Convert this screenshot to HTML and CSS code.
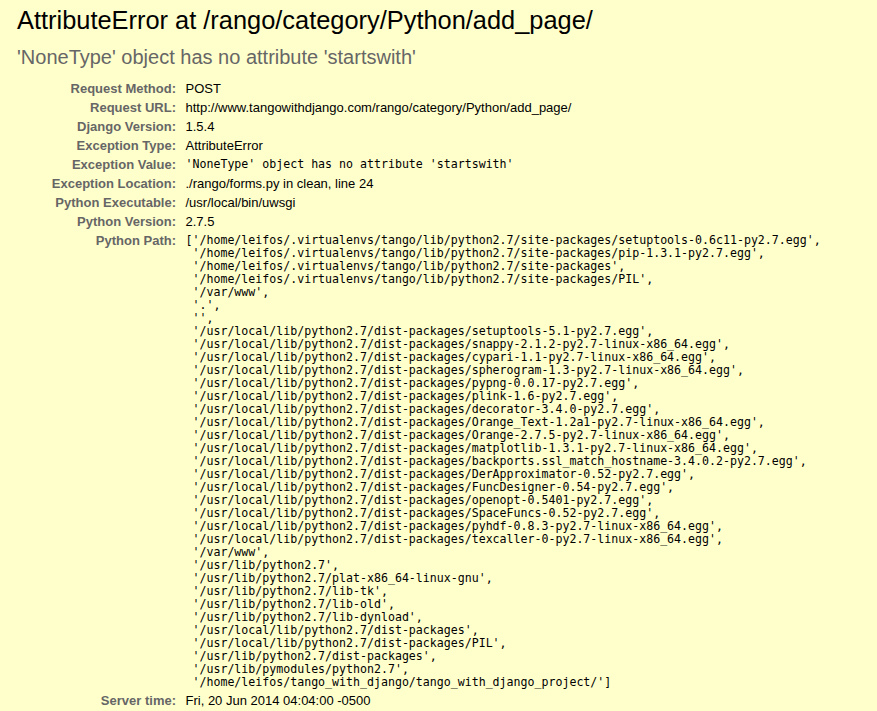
FILE: index.html
```html
<!DOCTYPE html>
<html>
<head>
<meta charset="utf-8">
<title>AttributeError at /rango/category/Python/add_page/</title>
<link rel="stylesheet" href="styles.css">
</head>
<body>
<div class="summary">
  <h1 class="title">AttributeError at /rango/category/Python/add_page/</h1>
  <pre class="exception-value">'NoneType' object has no attribute 'startswith'</pre>
  <table class="meta">
    <tr><th>Request Method:</th><td>POST</td></tr>
    <tr><th>Request URL:</th><td>http://www.tangowithdjango.com/rango/category/Python/add_page/</td></tr>
    <tr><th>Django Version:</th><td>1.5.4</td></tr>
    <tr><th>Exception Type:</th><td>AttributeError</td></tr>
    <tr><th>Exception Value:</th><td><pre class="code">'NoneType' object has no attribute 'startswith'</pre></td></tr>
    <tr><th>Exception Location:</th><td>./rango/forms.py in clean, line 24</td></tr>
    <tr><th>Python Executable:</th><td>/usr/local/bin/uwsgi</td></tr>
    <tr><th>Python Version:</th><td>2.7.5</td></tr>
    <tr><th>Python Path:</th><td><pre class="code">['/home/leifos/.virtualenvs/tango/lib/python2.7/site-packages/setuptools-0.6c11-py2.7.egg',
 '/home/leifos/.virtualenvs/tango/lib/python2.7/site-packages/pip-1.3.1-py2.7.egg',
 '/home/leifos/.virtualenvs/tango/lib/python2.7/site-packages',
 '/home/leifos/.virtualenvs/tango/lib/python2.7/site-packages/PIL',
 '/var/www',
 '.',
 '',
 '/usr/local/lib/python2.7/dist-packages/setuptools-5.1-py2.7.egg',
 '/usr/local/lib/python2.7/dist-packages/snappy-2.1.2-py2.7-linux-x86_64.egg',
 '/usr/local/lib/python2.7/dist-packages/cypari-1.1-py2.7-linux-x86_64.egg',
 '/usr/local/lib/python2.7/dist-packages/spherogram-1.3-py2.7-linux-x86_64.egg',
 '/usr/local/lib/python2.7/dist-packages/pypng-0.0.17-py2.7.egg',
 '/usr/local/lib/python2.7/dist-packages/plink-1.6-py2.7.egg',
 '/usr/local/lib/python2.7/dist-packages/decorator-3.4.0-py2.7.egg',
 '/usr/local/lib/python2.7/dist-packages/Orange_Text-1.2a1-py2.7-linux-x86_64.egg',
 '/usr/local/lib/python2.7/dist-packages/Orange-2.7.5-py2.7-linux-x86_64.egg',
 '/usr/local/lib/python2.7/dist-packages/matplotlib-1.3.1-py2.7-linux-x86_64.egg',
 '/usr/local/lib/python2.7/dist-packages/backports.ssl_match_hostname-3.4.0.2-py2.7.egg',
 '/usr/local/lib/python2.7/dist-packages/DerApproximator-0.52-py2.7.egg',
 '/usr/local/lib/python2.7/dist-packages/FuncDesigner-0.54-py2.7.egg',
 '/usr/local/lib/python2.7/dist-packages/openopt-0.5401-py2.7.egg',
 '/usr/local/lib/python2.7/dist-packages/SpaceFuncs-0.52-py2.7.egg',
 '/usr/local/lib/python2.7/dist-packages/pyhdf-0.8.3-py2.7-linux-x86_64.egg',
 '/usr/local/lib/python2.7/dist-packages/texcaller-0-py2.7-linux-x86_64.egg',
 '/var/www',
 '/usr/lib/python2.7',
 '/usr/lib/python2.7/plat-x86_64-linux-gnu',
 '/usr/lib/python2.7/lib-tk',
 '/usr/lib/python2.7/lib-old',
 '/usr/lib/python2.7/lib-dynload',
 '/usr/local/lib/python2.7/dist-packages',
 '/usr/local/lib/python2.7/dist-packages/PIL',
 '/usr/lib/python2.7/dist-packages',
 '/usr/lib/pymodules/python2.7',
 '/home/leifos/tango_with_django/tango_with_django_project/']</pre></td></tr>
    <tr><th>Server time:</th><td>Fri, 20 Jun 2014 04:04:00 -0500</td></tr>
  </table>
</div>
</body>
</html>
```

FILE: styles.css
```css
html, body {
  margin: 0;
  padding: 0;
}
body {
  background: #ffffcc;
  font-family: "Liberation Sans", Arial, sans-serif;
  font-size: 13px;
  color: #000;
}
.summary {
  background: #ffffcc;
  padding: 5px 17px 10px 17px;
  min-height: 696px;
}
.title {
  margin: 0;
  font-size: 25.4px;
  font-weight: normal;
  line-height: 30px;
}
.exception-value {
  margin: 11px 0 11px 0;
  font-family: "Liberation Sans", Arial, sans-serif;
  font-size: 20px;
  line-height: 22px;
  color: #666;
  white-space: pre-wrap;
}
.meta {
  border: none;
  border-collapse: collapse;
  width: 100%;
}
.meta th, .meta td {
  vertical-align: top;
  padding: 2px 3px;
  line-height: 15px;
}
.meta th {
  width: 156px;
  text-align: right;
  color: #666;
  font-weight: bold;
  padding-right: 6.5px;
  white-space: nowrap;
}
.meta td {
  text-align: left;
}
.code {
  margin: 0;
  font-family: "DejaVu Sans Mono", monospace;
  font-size: 11.6px;
  line-height: 13px;
  padding-top: 1px;
  color: #000;
}
```
